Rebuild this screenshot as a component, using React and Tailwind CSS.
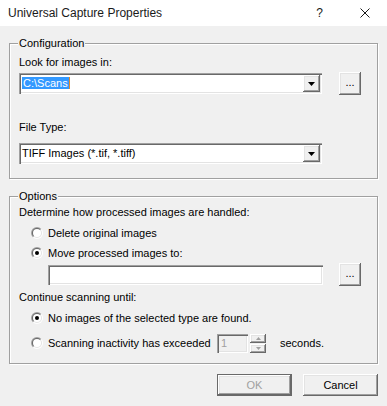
import React from 'react';

// classic win32 bevels
const raised = "shadow-[inset_-1px_-1px_0_#696969,inset_1px_1px_0_#ffffff,inset_-2px_-2px_0_#a0a0a0,inset_2px_2px_0_#e3e3e3]";
const sunken = "shadow-[inset_1px_1px_0_#a0a0a0,inset_2px_2px_0_#696969,inset_-1px_-1px_0_#ffffff,inset_-2px_-2px_0_#e3e3e3]";

function Radio({ checked }) {
  return (
    <svg width="12" height="12" viewBox="0 0 12 12" className="shrink-0">
      <defs>
        <linearGradient id="rOuter" x1="0" y1="0" x2="1" y2="1">
          <stop offset="0.45" stopColor="#a0a0a0" />
          <stop offset="0.55" stopColor="#ffffff" />
        </linearGradient>
        <linearGradient id="rInner" x1="0" y1="0" x2="1" y2="1">
          <stop offset="0.45" stopColor="#696969" />
          <stop offset="0.55" stopColor="#e3e3e3" />
        </linearGradient>
      </defs>
      <circle cx="6" cy="6" r="6" fill="url(#rOuter)" />
      <circle cx="6" cy="6" r="5" fill="url(#rInner)" />
      <circle cx="6" cy="6" r="4" fill="#ffffff" />
      {checked && <circle cx="6" cy="6" r="2" fill="#000000" />}
    </svg>
  );
}

function DropButton() {
  return (
    <div className={`mr-[2px] flex h-[17px] w-[17px] shrink-0 items-center justify-center bg-[#f0f0f0] ${raised}`}>
      <svg width="7" height="4" viewBox="0 0 7 4">
        <path d="M0 0h7L3.5 4z" fill="#000" />
      </svg>
    </div>
  );
}

function Combo({ children }) {
  return (
    <div className={`flex h-[21px] w-[303px] shrink-0 items-center bg-white ${sunken}`}>
      <div className="flex-1 pl-[3px] leading-[13px]">{children}</div>
      <DropButton />
    </div>
  );
}

function Browse() {
  return (
    <div className={`flex h-[23px] w-[22px] shrink-0 items-center justify-center bg-[#f0f0f0] pb-[2px] ${raised}`}>
      ...
    </div>
  );
}

function Group({ label, className, children }) {
  return (
    <div className={`relative border border-[#a0a0a0] shadow-[inset_1px_1px_0_#ffffff,1px_1px_0_#ffffff] ${className}`}>
      <span className="absolute left-[8px] top-[-7px] bg-[#f0f0f0] px-[1px] leading-[13px]">{label}</span>
      {children}
    </div>
  );
}

function RadioRow({ checked, children }) {
  return (
    <div className="flex h-[20px] items-center pl-[12px]">
      <Radio checked={checked} />
      <span className="ml-[5px] leading-[13px]">{children}</span>
    </div>
  );
}

export default function App() {
  return (
    <div className="h-[406px] w-[387px] overflow-hidden bg-[#f0f0f0] font-['Liberation_Sans',Arial,sans-serif] text-[11px] text-black">
      {/* title bar */}
      <div className="flex h-[26px] items-center bg-white pl-[8px]">
        <span className="text-[12px] text-[#1a1a1a]">Universal Capture Properties</span>
        <span className="ml-auto text-[12px] text-[#1a1a1a]">?</span>
        <svg width="10" height="10" viewBox="0 0 10 10" className="ml-[37px] mr-[17px]">
          <path d="M0.5 0.5L9.5 9.5M9.5 0.5L0.5 9.5" stroke="#1a1a1a" strokeWidth="1" />
        </svg>
      </div>

      <div className="pl-[9px] pt-[17px]">
        <Group label="Configuration" className="h-[136px] w-[369px]">
          <div className="pl-[9px] pt-[12px]">
            <div className="leading-[13px]">Look for images in:</div>
            <div className="mt-[3px] flex h-[23px] items-center">
              <Combo>
                <span className="border-r border-[#e08a2c] bg-[#3399ff] px-[1px] py-[0px] text-white">C:\Scans</span>
              </Combo>
              <div className="ml-[17px]">
                <Browse />
              </div>
            </div>
            <div className="mt-[26px] leading-[13px]">File Type:</div>
            <div className="mt-[9px]">
              <Combo>TIFF Images (*.tif, *.tiff)</Combo>
            </div>
          </div>
        </Group>

        <Group label="Options" className="mt-[17px] h-[168px] w-[369px]">
          <div className="pl-[9px] pt-[9px]">
            <div className="leading-[13px]">Determine how processed images are handled:</div>
            <div className="mt-[4px]">
              <RadioRow>Delete original images</RadioRow>
              <RadioRow checked>Move processed images to:</RadioRow>
            </div>
            <div className="flex h-[23px] items-center">
              <div className={`ml-[29px] h-[20px] w-[275px] shrink-0 bg-white ${sunken}`} />
              <div className="ml-[16px]">
                <Browse />
              </div>
            </div>
            <div className="mt-[5px] leading-[13px]">Continue scanning until:</div>
            <div className="mt-[4px]">
              <RadioRow checked>No images of the selected type are found.</RadioRow>
            </div>
            <div className="mt-[5px] flex h-[20px] items-center pl-[12px]">
              <Radio />
              <span className="ml-[5px] w-[169px] shrink-0 leading-[13px]">Scanning inactivity has exceeded</span>
              <div className={`flex h-[19px] w-[31px] shrink-0 items-center bg-[#f0f0f0] pl-[4px] text-[#a0a0a0] ${sunken}`}>
                1
              </div>
              <div className="ml-[2px] flex h-[19px] w-[16px] shrink-0 flex-col">
                <div className={`flex h-[9px] items-center justify-center bg-[#f0f0f0] ${raised}`}>
                  <svg width="5" height="3" viewBox="0 0 5 3"><path d="M2.5 0L5 3H0z" fill="#a0a0a0" /></svg>
                </div>
                <div className={`mt-[1px] flex h-[9px] items-center justify-center bg-[#f0f0f0] ${raised}`}>
                  <svg width="5" height="3" viewBox="0 0 5 3"><path d="M0 0h5L2.5 3z" fill="#a0a0a0" /></svg>
                </div>
              </div>
              <span className="ml-[14px] leading-[13px]">seconds.</span>
            </div>
          </div>
        </Group>

        <div className="mt-[10px] flex w-[369px] justify-end gap-[11px]">
          <div className="h-[22px] w-[75px] border border-[#696969]">
            <div className={`flex h-full w-full items-center justify-center bg-[#f0f0f0] text-[#a0a0a0] ${raised}`}>OK</div>
          </div>
          <div className={`flex h-[22px] w-[75px] items-center justify-center bg-[#f0f0f0] ${raised}`}>Cancel</div>
        </div>
      </div>
    </div>
  );
}
